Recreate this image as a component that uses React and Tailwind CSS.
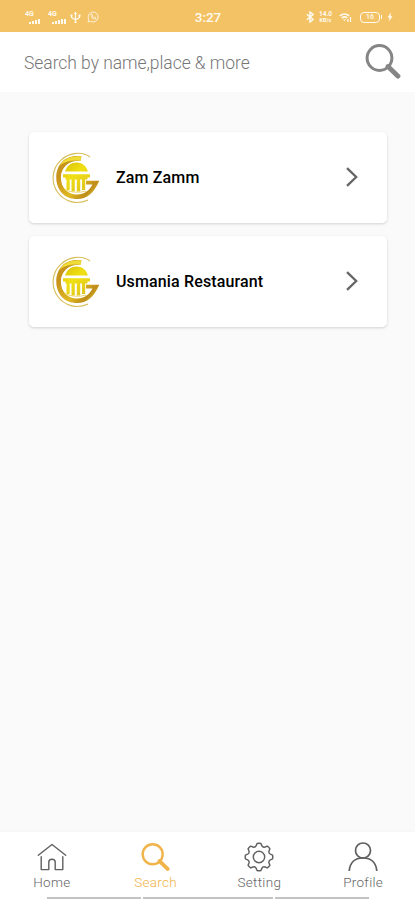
import React from "react";

function Signal({ bars }) {
  return (
    <div className="flex h-[13px] w-[18px] flex-col">
      <span className="h-[6px] text-[7px] font-bold leading-[6px]">4G</span>
      <div className="flex h-[7px] items-end gap-px pl-[4px]">
        {bars.map((h, i) => (
          <span key={i} className="w-[2px] shrink-0 bg-[#fffaf0]" style={{ height: h }} />
        ))}
      </div>
    </div>
  );
}

function StatusBar() {
  return (
    <header className="flex h-8 shrink-0 items-center bg-[#f3c265] pt-[2px] text-[#fffaf0]">
      <div className="flex w-[194px] items-center pl-[25px]">
        <div className="w-[23px]"><Signal bars={[2, 3, 4, 5]} /></div>
        <div className="w-[22px]"><Signal bars={[2, 3, 4, 5, 5]} /></div>
        <svg className="h-[13px] w-[11px]" viewBox="0 0 11 13" fill="none" stroke="currentColor" strokeWidth="1.2">
          <path d="M5.5 1.5V11M1.5 4V6.5L5.5 9L9.5 6.5V4" />
          <path d="M3.8 3L5.5.7 7.2 3ZM4.5 10.5h2v1.5h-2z" fill="currentColor" stroke="none" />
          <path d="M.5 3.5h2v2h-2zM8.5 3.5h2v2h-2z" fill="currentColor" stroke="none" />
        </svg>
        <svg className="ml-[6px] h-[12px] w-[12px]" viewBox="0 0 12 12" fill="none" stroke="currentColor" strokeWidth="1" opacity=".85">
          <path d="M1 11L1.7 8.3A5 5 0 1 1 3.6 10.3Z" />
          <path d="M4 3.3C3.5 5.7 6 8.6 8.5 8L8.8 6.8 7.3 6 6.5 6.7 5.2 5.2 5.7 4.6 5 3Z" />
        </svg>
      </div>
      <span className="w-[28px] text-center text-[13.5px] font-medium leading-4">3:27</span>
      <div className="flex items-center pl-[84px]">
        <svg className="h-[12px] w-[8px]" viewBox="0 0 8 12" fill="none" stroke="currentColor" strokeWidth="1.5">
          <path d="M.8 3.2L7 8.5 4 11V1L7 3.5.8 8.8" />
        </svg>
        <div className="ml-[4px] flex w-[15px] flex-col text-center font-bold">
          <span className="text-[6.5px] leading-[6px]">14.0</span>
          <span className="text-[5.5px] leading-[6px]">KB/s</span>
        </div>
        <svg className="ml-[6px] h-[11px] w-[13px]" viewBox="0 0 13 11" fill="none" stroke="currentColor" strokeWidth="1.7">
          <path d="M.8 3.8Q5.5.2 10.2 3.8M2.8 6Q5.5 3.7 8.2 6" />
          <path d="M4 7.5L5.5 9.3 7 7.5Z" fill="currentColor" stroke="none" />
          <path d="M9 10V7M11.5 10V5" strokeWidth="1.2" />
        </svg>
        <div className="ml-[8px] flex h-[11px] w-[20px] items-center justify-center rounded-[4px] border border-[#fffaf0]">
          <span className="text-[7px] font-medium leading-[7px]">16</span>
        </div>
        <span className="ml-px h-[4px] w-px bg-[#fffaf0]" />
        <svg className="ml-[5px] h-[10px] w-[6px]" viewBox="0 0 6 10" fill="currentColor">
          <path d="M4 .5L.5 5.5H2.5L2 9.5 5.5 4.2H3.5Z" />
        </svg>
      </div>
    </header>
  );
}

function SearchIcon({ className }) {
  return (
    <svg className={className} viewBox="0 0 36 36" fill="none" stroke="currentColor">
      <circle cx="14.5" cy="14" r="12.4" strokeWidth="3" />
      <path d="M23 22.5L33 32.2" strokeWidth="4.8" strokeLinecap="round" />
    </svg>
  );
}

function Logo() {
  return (
    <svg className="h-[52px] w-[50px] shrink-0" viewBox="0 0 50 52" fill="none">
      <defs>
        <linearGradient id="gold" x1="2" y1="8" x2="46" y2="46" gradientUnits="userSpaceOnUse">
          <stop offset="0" stopColor="#c79a1c" />
          <stop offset=".25" stopColor="#c7931b" />
          <stop offset=".6" stopColor="#e0b922" />
          <stop offset=".8" stopColor="#bd8c18" />
          <stop offset="1" stopColor="#eee046" />
        </linearGradient>
        <linearGradient id="dome" x1="12" y1="8" x2="36" y2="40" gradientUnits="userSpaceOnUse">
          <stop stopColor="#d4bd08" />
          <stop offset=".45" stopColor="#f1e014" />
          <stop offset="1" stopColor="#dcc020" />
        </linearGradient>
      </defs>
      <path d="M36 48A24.3 24.3 0 0 1 9 8.2Q14 3 22 1.6C28 .8 34 1.7 38 5" stroke="#d6bd55" strokeWidth="1.1" />
      <path d="M29.5 4.5C14 2 4.3 12 4.3 25.5C4.3 38.5 13 47 25 47C36 47 42.5 40 47.3 28.8H34V32.6H40.5C37 39 32.5 42.5 25 42.5C15.5 42.5 8.9 35.5 8.9 25.5C8.9 16 16 8.3 28.5 8.8Z" fill="url(#gold)" />
      <path d="M29.5 4.5C19 3 11 7.5 7.5 13.5C13 9.5 20 8 28.5 8.8Z" fill="#efdc37" />
      <path d="M13 19.5C15 13.5 19 10.5 24.5 10.5S34 13.5 36 19.5Z" fill="url(#dome)" />
      <path d="M11 22.2H38V25.5H35.5V27.5H13.5V25.5H11Z" fill="url(#dome)" />
      <path d="M14.5 27H17.7V38H14.5ZM19.5 27H22.8V39.5H19.5ZM24.8 27H28.2V39.5H24.8ZM30 27H33.2V38H30Z" fill="url(#dome)" />
      <path d="M12.5 37.5Q22 42 34 39.2" stroke="#e8cf4c" strokeWidth=".8" />
    </svg>
  );
}

function RestaurantCard({ name }) {
  return (
    <button className="flex h-[91px] w-full items-center rounded-[5px] bg-white pl-[23px] pr-[29px] text-left shadow-[0_1px_3px_rgba(0,0,0,0.16)]">
      <Logo />
      <span className="ml-[14px] flex-1 text-[16px] font-medium leading-6 tracking-[0.14px] text-black">{name}</span>
      <svg className="mb-[2px] h-[20px] w-[12px]" viewBox="0 0 12 20" fill="none" stroke="#666" strokeWidth="2.3">
        <path d="M1 1.2L10.2 10 1 18.8" />
      </svg>
    </button>
  );
}

function HomeIcon() {
  return (
    <svg className="h-[30px] w-[30px]" viewBox="0 0 30 30" fill="none" stroke="currentColor" strokeWidth="1.4" strokeLinecap="round" strokeLinejoin="round">
      <path d="M1.3 13.2L15 2.5 28.7 13.2" />
      <path d="M4.2 14.8V27.6H11.8V20.2Q11.8 17.2 15 17.2T18.2 20.2V27.6H25.8V14.8" />
    </svg>
  );
}

// Closed outline with eight rounded teeth around a (15, 15) centre.
const gearPath = Array.from({ length: 8 }, (_, i) => {
  const point = (radius, offset) => {
    const a = ((i * 45 + offset) * Math.PI) / 180;
    return `${(15 + radius * Math.sin(a)).toFixed(2)} ${(15 - radius * Math.cos(a)).toFixed(2)}`;
  };
  return `${i ? "L" : "M"}${point(13.7, -8)}Q${point(14, 0)} ${point(13.7, 8)}L${point(11.7, 14)}Q${point(10.1, 22.5)} ${point(11.7, 31)}`;
}).join("") + "Z";

function GearIcon() {
  return (
    <svg className="h-[30px] w-[30px]" viewBox="0 0 30 30" fill="none" stroke="currentColor" strokeWidth="1.45" strokeLinejoin="round">
      <path d={gearPath} />
      <circle cx="15" cy="15" r="5.7" />
    </svg>
  );
}

function ProfileIcon() {
  return (
    <svg className="h-[30px] w-[30px]" viewBox="0 0 30 30" fill="none" stroke="currentColor" strokeWidth="1.7">
      <circle cx="15" cy="8.5" r="7.5" />
      <path d="M1.2 29C2 20.5 7 16 15 16S28 20.5 28.8 29" />
    </svg>
  );
}

function NavItem({ label, active, children }) {
  return (
    <a className={`flex flex-col items-center pt-[10px] ${active ? "text-[#f0b44b]" : "text-[#606060]"}`}>
      <span className="flex h-[30px] items-center justify-center">{children}</span>
      <span className={`mt-[2px] text-[13.5px] font-light leading-4 tracking-[0.3px] ${active ? "text-[#f0b44b]" : "text-[#666]"}`}>{label}</span>
    </a>
  );
}

export default function App() {
  return (
    <div className="flex h-[900px] w-full flex-col overflow-hidden bg-[#fafafa] font-[Roboto,sans-serif]">
      <StatusBar />
      <div className="flex h-[60px] shrink-0 items-center bg-white pl-[24px] pr-[14px] shadow-[0_0_3px_rgba(0,0,0,0.02)]">
        <span className="flex-1 pt-px text-[17.5px] font-light leading-6 tracking-[-0.05px] text-[#777]">Search by name,place &amp; more</span>
        <SearchIcon className="h-[36px] w-[36px] text-[#858585]" />
      </div>
      <main className="flex flex-1 flex-col gap-[13px] pl-[29px] pr-[28px] pt-[40px]">
        <RestaurantCard name="Zam Zamm" />
        <RestaurantCard name="Usmania Restaurant" />
      </main>
      <nav className="flex h-[68px] shrink-0 flex-col justify-between bg-white shadow-[0_-1px_5px_rgba(0,0,0,0.025)]">
        <div className="grid grid-cols-4">
          <NavItem label="Home"><HomeIcon /></NavItem>
          <NavItem label="Search" active><SearchIcon className="h-[29px] w-[29px]" /></NavItem>
          <NavItem label="Setting"><GearIcon /></NavItem>
          <NavItem label="Profile"><ProfileIcon /></NavItem>
        </div>
        <div className="mb-px flex h-[2px] shrink-0 gap-[2px] pl-[47px]">
          <span className="w-[94px] bg-[#c2c2c2]" />
          <span className="w-[130px] bg-[#c2c2c2]" />
          <span className="w-[94px] bg-[#c2c2c2]" />
        </div>
      </nav>
    </div>
  );
}
